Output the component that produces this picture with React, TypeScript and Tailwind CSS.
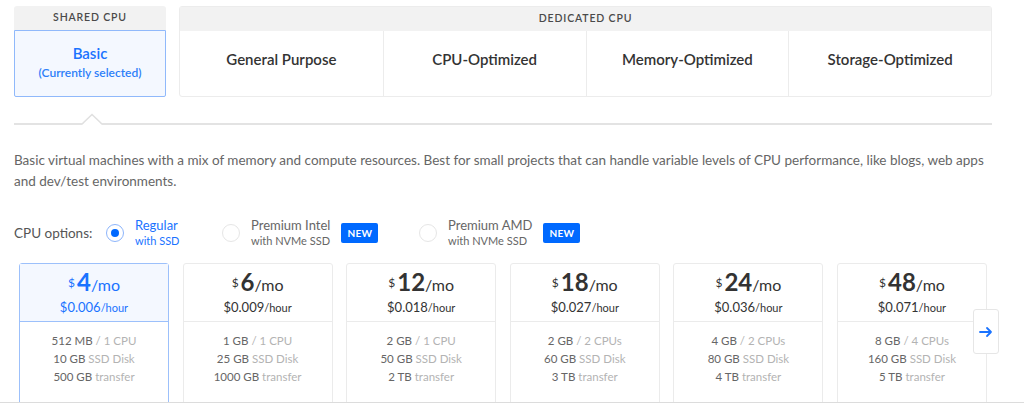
import React from "react";

const plans = [
  { p: "4", h: "$0.006", mem: "512 MB", cpu: "1 CPU", disk: "10 GB", tr: "500 GB", sel: true },
  { p: "6", h: "$0.009", mem: "1 GB", cpu: "1 CPU", disk: "25 GB", tr: "1000 GB" },
  { p: "12", h: "$0.018", mem: "2 GB", cpu: "1 CPU", disk: "50 GB", tr: "2 TB" },
  { p: "18", h: "$0.027", mem: "2 GB", cpu: "2 CPUs", disk: "60 GB", tr: "3 TB" },
  { p: "24", h: "$0.036", mem: "4 GB", cpu: "2 CPUs", disk: "80 GB", tr: "4 TB" },
  { p: "48", h: "$0.071", mem: "8 GB", cpu: "4 CPUs", disk: "160 GB", tr: "5 TB" },
];

function Radio({ checked }: { checked?: boolean }) {
  return checked ? (
    <div className="w-[18px] h-[18px] rounded-full border border-[#8db5fb] flex items-center justify-center shrink-0">
      <div className="w-[8px] h-[8px] rounded-full bg-[#0069ff]" />
    </div>
  ) : (
    <div className="w-[18px] h-[18px] rounded-full border border-[#e6e6e6] shrink-0" />
  );
}

function Badge() {
  return (
    <div className="ml-[11px] w-[37px] h-[20px] bg-[#0069ff] rounded-[2px] text-white text-[10px] font-bold flex items-center justify-center tracking-wide">
      NEW
    </div>
  );
}

export default function App() {
  return (
    <div
      className="w-[1024px] h-[408px] bg-white overflow-hidden"
      style={{ fontFamily: "Lato, 'Open Sans', sans-serif" }}
    >
      <div className="h-[403px] border-b border-[#dcdcdc] overflow-hidden pl-[14px] pt-[6px]">
        {/* Top tabs */}
        <div className="flex gap-[13px] w-[978px]">
          <div className="w-[152px] flex flex-col">
            <div className="h-[24px] bg-[#f2f2f2] rounded-t-[3px] flex items-center justify-center text-[10.5px] font-semibold tracking-[0.08em] text-[#4a4a4a]">
              SHARED CPU
            </div>
            <div className="h-[67px] border border-[#90b9fb] bg-[#f4f8ff] rounded-b-[2px] flex flex-col items-center justify-center pb-[4px]">
              <div className="text-[15px] font-semibold text-[#1a73ff] leading-[20px]">Basic</div>
              <div className="text-[12px] font-semibold text-[#2d7ff9] leading-[16px] mt-[2px]">(Currently selected)</div>
            </div>
          </div>
          <div className="flex-1 flex flex-col border border-[#ececec] rounded-[3px] h-[91px]">
            <div className="h-[24px] bg-[#f2f2f2] flex items-center justify-center text-[10.5px] font-semibold tracking-[0.08em] text-[#4a4a4a]">
              DEDICATED CPU
            </div>
            <div className="flex-1 grid grid-cols-4">
              {["General Purpose", "CPU-Optimized", "Memory-Optimized", "Storage-Optimized"].map((t, i) => (
                <div
                  key={t}
                  className={`flex items-center justify-center pb-[8px] text-[15px] font-semibold text-[#333] ${i > 0 ? "border-l border-[#ececec]" : ""}`}
                >
                  {t}
                </div>
              ))}
            </div>
          </div>
        </div>

        {/* Divider with caret */}
        <div className="relative mt-[26px] h-[2px] w-[978px] bg-[#e3e3e3]">
          <svg className="absolute left-[68px] bottom-0" width="20" height="12" viewBox="0 0 20 12">
            <polygon points="0,12 10,1.5 20,12" fill="white" />
            <polyline points="0,11 10,1.5 20,11" fill="none" stroke="#e0e0e0" strokeWidth="1.6" />
          </svg>
        </div>

        {/* Description */}
        <p className="mt-[25px] w-[978px] text-[13.5px] leading-[21px] text-[#666]">
          Basic virtual machines with a mix of memory and compute resources. Best for small projects that can handle variable levels of CPU performance, like blogs, web apps and dev/test environments.
        </p>

        {/* CPU options */}
        <div className="mt-[25px] flex items-center h-[32px]">
          <div className="w-[92px] text-[13.5px] text-[#555]">CPU options:</div>
          <div className="w-[116px] flex items-center">
            <Radio checked />
            <div className="ml-[11px] flex flex-col text-[#1a73ff]">
              <span className="text-[13px] leading-[16px]">Regular</span>
              <span className="text-[11px] leading-[16px]">with SSD</span>
            </div>
          </div>
          <div className="w-[197px] flex items-center">
            <Radio />
            <div className="ml-[11px] flex flex-col text-[#666]">
              <span className="text-[13px] leading-[16px]">Premium Intel</span>
              <span className="text-[11px] leading-[16px]">with NVMe SSD</span>
            </div>
            <Badge />
          </div>
          <div className="flex items-center">
            <Radio />
            <div className="ml-[11px] flex flex-col text-[#666]">
              <span className="text-[13px] leading-[16px]">Premium AMD</span>
              <span className="text-[11px] leading-[16px]">with NVMe SSD</span>
            </div>
            <Badge />
          </div>
        </div>

        {/* Plan cards */}
        <div className="relative mt-[14px] ml-[5px] flex gap-[13.6px]">
          {plans.map((pl) => (
            <div
              key={pl.p}
              className={`w-[150px] h-[160px] shrink-0 rounded-t-[3px] border ${pl.sel ? "border-[#9cc0fb]" : "border-[#ebebeb]"}`}
            >
              <div
                className={`h-[58px] flex flex-col items-center justify-center border-b ${pl.sel ? "bg-[#f4f8ff] border-[#9cc0fb] text-[#1a73ff]" : "border-[#ebebeb] text-[#333]"}`}
              >
                <div className="flex items-baseline leading-[26px]">
                  <span className="text-[12px] self-start mt-[1px] mr-[2px]">$</span>
                  <span className="text-[24px] font-bold">{pl.p}</span>
                  <span className="text-[16px]">/mo</span>
                </div>
                <div className="leading-[16px]">
                  <span className="text-[13px]">{pl.h}</span>
                  <span className="text-[11px]">/hour</span>
                </div>
              </div>
              <div className="pt-[10px] flex flex-col items-center text-[11.5px] leading-[18px]">
                <div>
                  <span className="text-[#666]">{pl.mem}</span>
                  <span className="text-[#b3b3b3]"> / {pl.cpu}</span>
                </div>
                <div>
                  <span className="text-[#666]">{pl.disk}</span>
                  <span className="text-[#b3b3b3]"> SSD Disk</span>
                </div>
                <div>
                  <span className="text-[#666]">{pl.tr}</span>
                  <span className="text-[#b3b3b3]"> transfer</span>
                </div>
              </div>
            </div>
          ))}
          <button className="absolute left-[954px] top-[46px] w-[26px] h-[45px] bg-white border border-[#e6e6e6] rounded-[3px] flex items-center justify-center">
            <svg width="14" height="12" viewBox="0 0 14 12" fill="none" stroke="#1a73ff" strokeWidth="1.8" strokeLinecap="round" strokeLinejoin="round">
              <path d="M1 6h11M8 2l4 4-4 4" />
            </svg>
          </button>
        </div>
      </div>
    </div>
  );
}
